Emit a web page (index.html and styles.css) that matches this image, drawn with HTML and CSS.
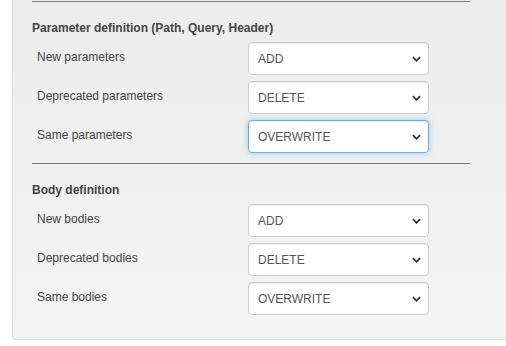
FILE: index.html
```html
<html>
  <head>
    <meta name="viewport" content="width=device-width, initial-scale=1"/>
    <link rel="stylesheet" href="styles.css">
  </head>
  <body>
    <div class="panel">
      <hr class="divider">
      <div class="section">
        <h4 class="section-title">Parameter definition (Path, Query, Header)</h4>
        <div class="field">
          <label>New parameters</label>
          <div class="select-wrap">
            <select class="form-control"><option>ADD</option></select>
            <svg class="chevron" viewBox="0 0 10 6"><path d="M1 1 L5 5 L9 1"/></svg>
          </div>
        </div>
        <div class="field">
          <label>Deprecated parameters</label>
          <div class="select-wrap">
            <select class="form-control"><option>DELETE</option></select>
            <svg class="chevron" viewBox="0 0 10 6"><path d="M1 1 L5 5 L9 1"/></svg>
          </div>
        </div>
        <div class="field">
          <label>Same parameters</label>
          <div class="select-wrap">
            <select class="form-control focused"><option>OVERWRITE</option></select>
            <svg class="chevron" viewBox="0 0 10 6"><path d="M1 1 L5 5 L9 1"/></svg>
          </div>
        </div>
      </div>
      <hr class="divider">
      <div class="section">
        <h4 class="section-title">Body definition</h4>
        <div class="field">
          <label>New bodies</label>
          <div class="select-wrap">
            <select class="form-control"><option>ADD</option></select>
            <svg class="chevron" viewBox="0 0 10 6"><path d="M1 1 L5 5 L9 1"/></svg>
          </div>
        </div>
        <div class="field">
          <label>Deprecated bodies</label>
          <div class="select-wrap">
            <select class="form-control"><option>DELETE</option></select>
            <svg class="chevron" viewBox="0 0 10 6"><path d="M1 1 L5 5 L9 1"/></svg>
          </div>
        </div>
        <div class="field">
          <label>Same bodies</label>
          <div class="select-wrap">
            <select class="form-control"><option>OVERWRITE</option></select>
            <svg class="chevron" viewBox="0 0 10 6"><path d="M1 1 L5 5 L9 1"/></svg>
          </div>
        </div>
      </div>
    </div>
  </body>
</html>
```

FILE: styles.css
```css
body {
  margin: 0;
  background-color: #fff;
  font-family: "Liberation Sans", Arial, sans-serif;
  font-size: 12px;
  color: #333;
  overflow: hidden;
}

.panel {
  margin-left: 12px;
  width: calc(100% - 12px);
  height: 340px;
  padding: 1px 0 0 19px;
  box-sizing: border-box;
  background: linear-gradient(to bottom, #ececec, #f4f4f4);
  border-left: 1px solid #dcdcdc;
  border-bottom: 1px solid #dcdcdc;
  border-bottom-left-radius: 4px;
}

.divider {
  width: 438px;
  margin: 0;
  border: none;
  height: 1px;
  background-color: #7a7a7a;
}

.section {
  width: 438px;
  padding-top: 18px;
  padding-bottom: 4px;
}

.section-title {
  margin: 0 0 6px 0;
  font-size: 12px;
  font-weight: 700;
  color: #444;
  line-height: 16px;
}

.field {
  display: grid;
  grid-template-columns: 211px 181px;
  align-items: center;
  padding-left: 5px;
  margin-bottom: 6px;
}

.field label {
  color: #444;
  margin-top: -4px;
}

.select-wrap {
  position: relative;
}

.form-control {
  appearance: none;
  -webkit-appearance: none;
  display: block;
  width: 181px;
  height: 33px;
  padding: 0 24px 0 9px;
  font-family: "Liberation Sans", Arial, sans-serif;
  font-size: 12px;
  color: #555;
  background-color: #fff;
  border: 1px solid #ccc;
  border-radius: 4px;
  box-shadow: inset 0 1px 1px rgba(0,0,0,.075);
  outline: none;
}

.form-control.focused {
  border-color: #66afe9;
  box-shadow: inset 0 1px 1px rgba(0,0,0,.075), 0 0 6px rgba(102,175,233,.6);
}

.chevron {
  position: absolute;
  right: 8px;
  top: 14px;
  width: 9px;
  height: 6px;
  pointer-events: none;
}

.chevron path {
  fill: none;
  stroke: #333;
  stroke-width: 2;
}
```
